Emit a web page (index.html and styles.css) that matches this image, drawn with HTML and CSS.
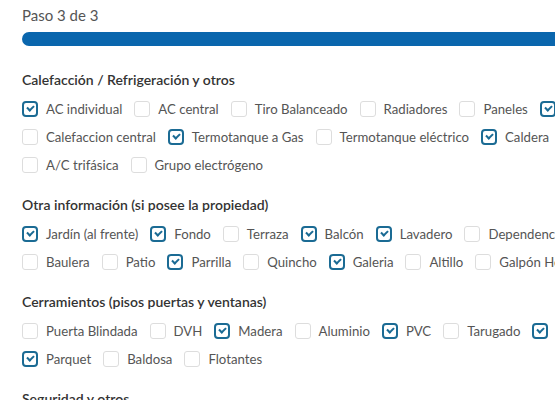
FILE: index.html
```html
<!DOCTYPE html>
<html lang="es">
<head>
<meta charset="utf-8">
<title>Paso 3 de 3</title>
<link rel="stylesheet" href="styles.css">
</head>
<body>
<div class="page">
  <div class="step">Paso 3 de 3</div>
  <div class="progress"><div class="progress-fill"></div></div>

  <section class="group">
    <h3 class="group-title">Calefacción / Refrigeración y otros</h3>
    <div class="row">
      <label class="opt"><span class="box on"></span>AC individual</label>
      <label class="opt"><span class="box"></span>AC central</label>
      <label class="opt"><span class="box"></span>Tiro Balanceado</label>
      <label class="opt"><span class="box"></span>Radiadores</label>
      <label class="opt"><span class="box"></span>Paneles</label>
      <label class="opt"><span class="box on"></span>Losa radiante</label>
    </div>
    <div class="row">
      <label class="opt"><span class="box"></span>Calefaccion central</label>
      <label class="opt"><span class="box on"></span>Termotanque a Gas</label>
      <label class="opt"><span class="box"></span>Termotanque eléctrico</label>
      <label class="opt"><span class="box on"></span>Caldera</label>
    </div>
    <div class="row">
      <label class="opt"><span class="box"></span>A/C trifásica</label>
      <label class="opt"><span class="box"></span>Grupo electrógeno</label>
    </div>
  </section>

  <section class="group">
    <h3 class="group-title">Otra información (si posee la propiedad)</h3>
    <div class="row">
      <label class="opt"><span class="box on"></span>Jardín (al frente)</label>
      <label class="opt"><span class="box on"></span>Fondo</label>
      <label class="opt"><span class="box"></span>Terraza</label>
      <label class="opt"><span class="box on"></span>Balcón</label>
      <label class="opt"><span class="box on"></span>Lavadero</label>
      <label class="opt"><span class="box"></span>Dependencia de servicio</label>
    </div>
    <div class="row">
      <label class="opt"><span class="box"></span>Baulera</label>
      <label class="opt"><span class="box"></span>Patio</label>
      <label class="opt"><span class="box on"></span>Parrilla</label>
      <label class="opt"><span class="box"></span>Quincho</label>
      <label class="opt"><span class="box on"></span>Galeria</label>
      <label class="opt"><span class="box"></span>Altillo</label>
      <label class="opt"><span class="box"></span>Galpón Herramientas</label>
    </div>
  </section>

  <section class="group">
    <h3 class="group-title">Cerramientos (pisos puertas y ventanas)</h3>
    <div class="row">
      <label class="opt"><span class="box"></span>Puerta Blindada</label>
      <label class="opt"><span class="box"></span>DVH</label>
      <label class="opt"><span class="box on"></span>Madera</label>
      <label class="opt"><span class="box"></span>Aluminio</label>
      <label class="opt"><span class="box on"></span>PVC</label>
      <label class="opt"><span class="box"></span>Tarugado</label>
      <label class="opt"><span class="box on"></span>Porcelanato</label>
    </div>
    <div class="row">
      <label class="opt"><span class="box on"></span>Parquet</label>
      <label class="opt"><span class="box"></span>Baldosa</label>
      <label class="opt"><span class="box"></span>Flotantes</label>
    </div>
  </section>

  <section class="group">
    <h3 class="group-title">Seguridad y otros</h3>
    <div class="row">
      <label class="opt"><span class="box"></span>Alarma</label>
      <label class="opt"><span class="box"></span>Cámaras</label>
    </div>
  </section>
</div>
</body>
</html>
```

FILE: styles.css
```css
html, body {
  margin: 0;
  padding: 0;
  background: #ffffff;
  overflow: hidden;
}

body {
  font-family: Lato, "Open Sans", "Liberation Sans", sans-serif;
  color: #555555;
  font-size: 14px;
}

.page {
  width: 820px;
  padding-left: 22px;
}

.step {
  font-size: 15px;
  line-height: 20px;
  padding-top: 5px;
  color: #555555;
}

.progress {
  margin-top: 7px;
  height: 14px;
  border-radius: 7px;
  background: #e9ecef;
  overflow: hidden;
}

.progress-fill {
  height: 100%;
  width: 100%;
  background: #0a66ad;
}

.group {
  margin-bottom: 16px;
}

.progress + .group {
  margin-top: 24px;
}

.group-title {
  margin: 0 0 5px;
  font-size: 14px;
  line-height: 20px;
  font-weight: 600;
  color: #333333;
}

.row {
  display: flex;
  flex-wrap: nowrap;
  align-items: center;
  height: 28px;
  white-space: nowrap;
}

.opt {
  display: flex;
  align-items: center;
  margin-right: 12px;
  font-size: 13.2px;
  color: #555555;
}

.box {
  box-sizing: border-box;
  width: 16px;
  height: 16px;
  margin-right: 8px;
  border: 1px solid #dddddd;
  border-radius: 3px;
  flex: none;
  position: relative;
}

.box.on {
  border: 2px solid #1b6b94;
  border-radius: 4px;
}

.box.on::after {
  content: "";
  position: absolute;
  left: 3px;
  top: 2px;
  width: 5px;
  height: 3px;
  border-left: 2px solid #1b6b94;
  border-bottom: 2px solid #1b6b94;
  transform: rotate(-45deg);
  transform-origin: center;
}
```
